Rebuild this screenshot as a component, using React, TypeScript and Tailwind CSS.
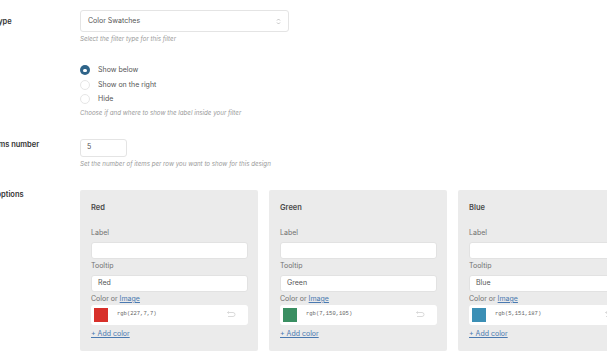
import type { ReactNode } from 'react';

const SWATCHES = [
  { name: 'Red', color: 'rgb(227,7,7)', hex: '#d8302a' },
  { name: 'Green', color: 'rgb(7,150,105)', hex: '#3a8f62' },
  { name: 'Blue', color: 'rgb(5,151,187)', hex: '#3b8fb5' },
];

function Help({ children }: { children: ReactNode }) {
  return <p className="text-[6.2px] italic leading-[8px] text-[#9a9a9a]">{children}</p>;
}

function Radio({ checked, label }: { checked?: boolean; label: string }) {
  return (
    <div className="flex h-[14.5px] items-center gap-[8px]">
      {checked ? (
        <span className="flex h-[10px] w-[10px] items-center justify-center rounded-full bg-[#2f6489]">
          <span className="h-[3.5px] w-[3.5px] rounded-full bg-white" />
        </span>
      ) : (
        <span className="h-[10px] w-[10px] rounded-full border border-[#e6e6e6] bg-white" />
      )}
      <span className="text-[7px] text-[#555]">{label}</span>
    </div>
  );
}

function ResetIcon() {
  return (
    <svg width="10" height="7" viewBox="0 0 10 7" fill="none" stroke="#d6d6d6" strokeWidth="0.9">
      <path d="M1.5 1.5 H7 A2 2 0 0 1 7 5.5 H2" />
      <path d="M3 0.5 L1.5 1.5 L3 2.5" />
    </svg>
  );
}

function SwatchCard({ name, color, hex }: { name: string; color: string; hex: string }) {
  return (
    <div className="w-[178px] shrink-0 rounded-[2px] bg-[#ebebeb] pb-[13px] pl-[11px] pr-[10px] pt-[13px]">
      <p className="text-[7.5px] font-semibold leading-[10px] text-[#4a4a4a]">{name}</p>
      <p className="mt-[15px] text-[7px] leading-[9px] text-[#707070]">Label</p>
      <div className="mt-[5px] h-[17px] rounded-[3px] border border-[#e2e2e2] bg-white" />
      <p className="mt-[2px] text-[7px] leading-[9px] text-[#707070]">Tooltip</p>
      <div className="mt-[5px] flex h-[17px] items-center rounded-[3px] border border-[#e2e2e2] bg-white px-[6px] text-[7px] text-[#555]">
        {name}
      </div>
      <p className="mt-[2.5px] text-[7px] leading-[9px] text-[#707070]">
        Color or <span className="text-[#4a79b0] underline">Image</span>
      </p>
      <div className="mt-[1.5px] flex h-[20px] items-center rounded-[3px] bg-white pl-[3px] pr-[12px]">
        <span className="h-[14px] w-[14px]" style={{ backgroundColor: hex }} />
        <span className="ml-[9px] font-['Liberation_Mono',monospace] text-[5.5px] text-[#666]">{color}</span>
        <span className="ml-auto">
          <ResetIcon />
        </span>
      </div>
      <p className="mt-[4.5px] text-[7px] leading-[9px] text-[#4a79b0] underline">+ Add color</p>
    </div>
  );
}

export default function App() {
  return (
    <div className="h-[355px] w-[607px] overflow-hidden bg-white font-['Inter',sans-serif] text-[7px] text-[#555]">
      <div className="ml-[-25px] pt-[10px]">
        <div className="flex">
          <div className="w-[105px] shrink-0 pt-[7px] text-[7.5px] font-semibold leading-[9px] text-[#333]">Filter type</div>
          <div>
            <div className="flex h-[22px] w-[209px] items-center justify-between rounded-[3px] border border-[#e4e4e4] bg-white pl-[7px] pr-[7px]">
              <span className="text-[7px] text-[#555]">Color Swatches</span>
              <svg width="5" height="7" viewBox="0 0 5 7" fill="none" stroke="#aaa" strokeWidth="0.7">
                <path d="M1 2.5 L2.5 1 L4 2.5" />
                <path d="M1 4.5 L2.5 6 L4 4.5" />
              </svg>
            </div>
            <div className="mt-[3px]">
              <Help>Select the filter type for this filter</Help>
            </div>
          </div>
        </div>

        <div className="mt-[20px] flex">
          <div className="w-[105px] shrink-0 pt-[3px] text-[7.5px] font-semibold leading-[9px] text-[#333]">
            <span className="ml-[-6px]">Label</span>
          </div>
          <div>
            <Radio checked label="Show below" />
            <Radio label="Show on the right" />
            <Radio label="Hide" />
            <div className="mt-[2px]">
              <Help>Choose if and where to show the label inside your filter</Help>
            </div>
          </div>
        </div>

        <div className="mt-[22px] flex">
          <div className="w-[105px] shrink-0 pt-[1px] text-[7.5px] font-semibold leading-[9px] text-[#333]">
            <span className="ml-[-3px]">Row items number</span>
          </div>
          <div>
            <div className="flex h-[18px] w-[47px] items-center rounded-[3px] border border-[#e4e4e4] bg-white px-[6px] text-[7px] text-[#555]">
              5
            </div>
            <div className="mt-[3px]">
              <Help>Set the number of items per row you want to show for this design</Help>
            </div>
          </div>
        </div>

        <div className="mt-[22px] flex">
          <div className="w-[105px] shrink-0 pt-0 text-[7.5px] font-semibold leading-[9px] text-[#333]">Color options</div>
          <div className="flex gap-[11px]">
            {SWATCHES.map((s) => (
              <SwatchCard key={s.name} {...s} />
            ))}
          </div>
        </div>
      </div>
    </div>
  );
}
